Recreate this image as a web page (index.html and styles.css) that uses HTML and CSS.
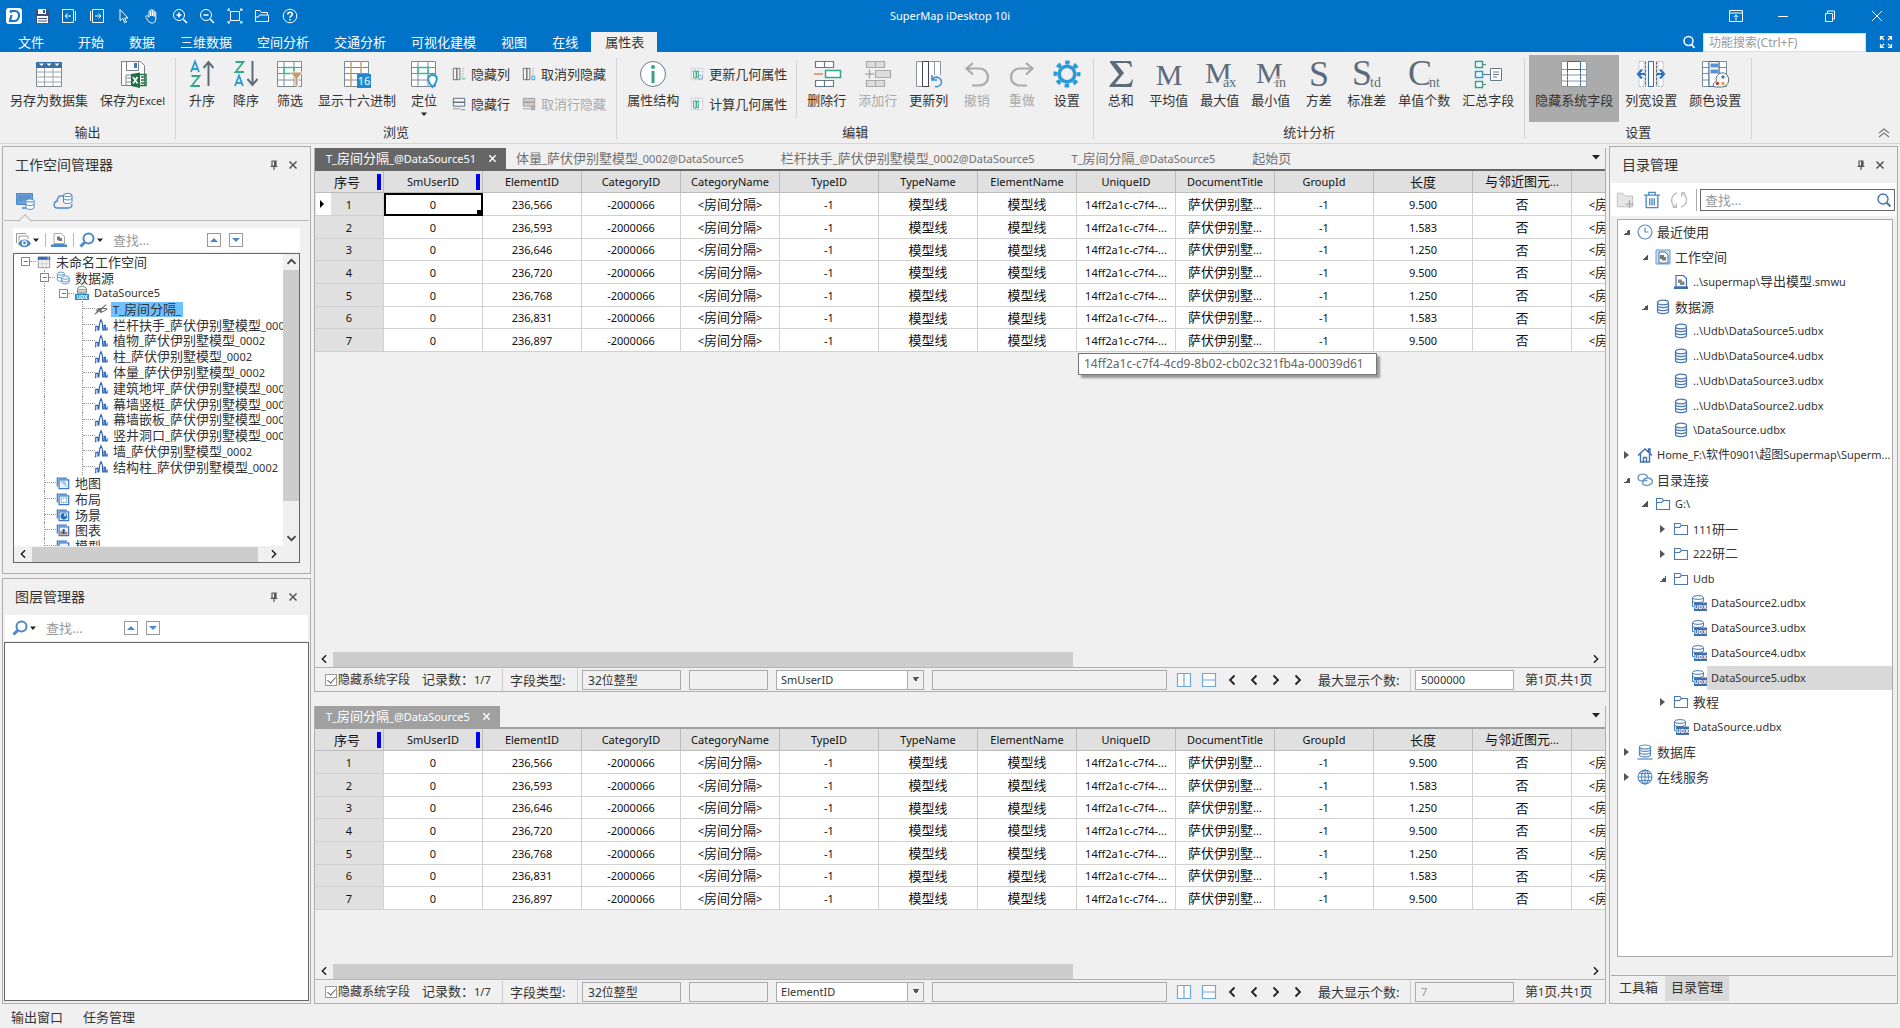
FILE: index.html
```html
<!DOCTYPE html>
<html lang="zh-CN">
<head>
  <meta charset="UTF-8">
  <meta name="viewport" content="width=device-width, initial-scale=1.0">
  <title>SuperMap iDesktop 10i</title>
  <link rel="stylesheet" href="styles.css">
</head>
<body>
  <!-- Icon sprite -->
  <svg class="sprite" aria-hidden="true">
    <symbol id="i-pin" viewBox="0 0 10 10"><path d="M3 1h4v5H3zM1.500 6.500h7M5 6.500V10" fill="none" stroke="#555" stroke-width="1.200"/><path d="M5 1h2v5H5z" fill="#555"/></symbol>
    <symbol id="i-close" viewBox="0 0 10 10"><path d="M1.500 1.500l7 7M8.500 1.500l-7 7" fill="none" stroke="#555" stroke-width="1.500"/></symbol>
    <symbol id="i-search" viewBox="0 0 16 16"><circle cx="9.500" cy="6.500" r="5" fill="none" stroke="#4a88c7" stroke-width="2"/><path d="M5.500 10.500L1.500 14.500" stroke="#4a88c7" stroke-width="3"/></symbol>
    <symbol id="i-db" viewBox="0 0 16 16"><g fill="#fff" stroke="#4a78b0" stroke-width="1.200"><path d="M2.500 3.500v9c0 2.700 11 2.700 11 0v-9"/><ellipse cx="8" cy="3.500" rx="5.500" ry="2.300"/><path d="M2.500 6.500c0 2.700 11 2.700 11 0M2.500 9.500c0 2.700 11 2.700 11 0" fill="none"/></g></symbol>
    <symbol id="i-dbbase" viewBox="0 0 16 16"><g fill="#fff" stroke="#5585bd" stroke-width="1.200"><path d="M2.500 3v8c0 2.500 11 2.500 11 0V3"/><ellipse cx="8" cy="3" rx="5.500" ry="2"/><path d="M2.500 5.500c0 2.500 11 2.500 11 0M2.500 8.300c0 2.500 11 2.500 11 0" fill="none"/><path d="M.5 15h15"/></g></symbol>
    <symbol id="i-udx" viewBox="0 0 16 16"><path d="M1.500 2.500v9h5M12.500 2.500V6" fill="none" stroke="#4a78b0"/><ellipse cx="7" cy="2.500" rx="5.500" ry="1.900" fill="#fff" stroke="#4a78b0"/><path d="M1.500 6.500c2 1.500 6 1.500 11 0" fill="none" stroke="#4a78b0"/><path d="M3 7.500h13V16H3z" fill="#3f6fae"/><text x="9.500" y="14.300" class="svg-udx">UDX</text></symbol>
    <symbol id="i-udxl" viewBox="0 0 16 16"><path d="M3 2.500V9h10V2.500" fill="#eee" stroke="#777"/><ellipse cx="8" cy="2.500" rx="5" ry="1.900" fill="#fff" stroke="#777"/><path d="M3 6c2 1.500 8 1.500 10 0" fill="none" stroke="#777"/><path d="M0 9h16v7H0z" fill="#2a8ecb"/><text x="8" y="15" class="svg-udx">UDX</text></symbol>
    <symbol id="i-folder" viewBox="0 0 16 16"><path d="M1.500 13.500v-11H7l1.500 2h6v9zM1.500 6.500h5l2-2" fill="none" stroke="#4a78b0" stroke-width="1.100"/></symbol>
    <symbol id="i-clock" viewBox="0 0 16 16"><circle cx="8" cy="8" r="7" fill="none" stroke="#5b8cc0" stroke-width="1.200"/><path d="M8 3.500V8h3.500" fill="none" stroke="#5b8cc0" stroke-width="1.200"/></symbol>
    <symbol id="i-wsfile" viewBox="0 0 16 16"><path d="M1 1h14v14H1z" fill="#cfe0f1" stroke="#6c99c9"/><path d="M4 3h6l3 3v8H4z" fill="#fff" stroke="#3f6fae"/><path d="M5 6h4v2h2v3.500H7V10H5z" fill="#777"/></symbol>
    <symbol id="i-smwu" viewBox="0 0 16 16"><path d="M3 1.500h7.500l3 3V13H3z" fill="#fff" stroke="#3f6fae" stroke-width="1.200"/><path d="M5 5.500h4v2h2.500V11H7V9H5z" fill="#888"/><path d="M1 12.500h14V15H1z" fill="#3f6fae"/></symbol>
    <symbol id="i-home" viewBox="0 0 16 16"><path d="M1 8.500L8 2l7 6.500M3.500 7v8h9V7M11.500 4.500V2H13v4M6.500 15v-4.500h3V15" fill="none" stroke="#3f6fae" stroke-width="1.400"/></symbol>
    <symbol id="i-link" viewBox="0 0 16 16"><path d="M10.500 5.500c0-5-9.500-4-9.500.3C1 8.500 4 9.500 6 8.500c1.500-3 7-3.500 9-.5 2.500 5-8.500 7.500-9.500 3 0-1 .5-2 2-2.500h3" fill="none" stroke="#6c99c9" stroke-width="1.400"/></symbol>
    <symbol id="i-globe" viewBox="0 0 16 16"><g fill="none" stroke="#5585bd" stroke-width="1.100"><circle cx="8" cy="8" r="7"/><ellipse cx="8" cy="8" rx="3.500" ry="7"/><path d="M8 1v14M1 8h14M2 4.500h12M2 11.500h12"/></g></symbol>
    <symbol id="i-model" viewBox="0 0 16 16"><path d="M1 14.500h1V9.500h2.500v4h1l1-8L8 2l1.500 3.500.5 8h1.500V8.500H13v5h2v-3" fill="none" stroke="#2d62b8" stroke-width="1.300"/></symbol>
    <symbol id="i-cad" viewBox="0 0 16 16"><path d="M1 14L14 3M2 9.500c3-3 5-2 5 1s4 0 8-2.500M3 11.500c4-5 6-4 5 0M6 7.500h9" fill="none" stroke="#666" stroke-width="1.200"/></symbol>
    <symbol id="i-ws" viewBox="0 0 16 16"><path d="M1.500 2.500h13v12h-13z" fill="#f4f4f4" stroke="#8a8a8a"/><path d="M1 2h14v3.500H1z" fill="#3568b5"/><path d="M12 2.800h1.500v1.500H12z" fill="#fff"/><path d="M6 6v8M10.500 6v8M2 10h12" stroke="#ccc" fill="none"/></symbol>
    <symbol id="i-src" viewBox="0 0 16 16"><g fill="#fff" stroke="#4a88c7"><path d="M1.500 3v7c0 1.500 3 2 5 1.500M9.500 5V3"/><ellipse cx="5.500" cy="3" rx="4" ry="1.700"/><path d="M1.500 6.500c1 1.200 3 1.500 4.500 1"/><path d="M6.500 8v4.500c0 3 8.500 3 8.500 0V8"/><ellipse cx="10.700" cy="7.500" rx="4.200" ry="1.900"/><path d="M6.500 10.500c1 2.500 7.500 2.500 8.500 0" fill="none"/></g></symbol>
    <symbol id="i-stack" viewBox="0 0 16 16"><path d="M1.500 12V2.500h11M3.500 4.500h11v10h-11z" fill="#eaf2fb" stroke="#3f78c5" stroke-width="1.400"/></symbol>
    <symbol id="i-caret" viewBox="0 0 8 8"><path d="M0 2h8L4 6.500z" fill="#222"/></symbol>
    <symbol id="i-eye" viewBox="0 0 16 16"><path d="M1.500 11V1.500H11M4 9V4h9v3" fill="none" stroke="#999"/><path d="M3 11.500c3-5.500 10-5.500 13 0-3 5-10 5-13 0z" fill="#4a88c7"/><circle cx="9.500" cy="11" r="2.700" fill="#fff"/><circle cx="9.500" cy="11" r="1.400" fill="#4a88c7"/></symbol>
    <symbol id="i-colv" viewBox="0 0 16 16"><path d="M1.500 1.500h13v13h-13zM8 1.500v13" fill="#fff" stroke="#6fa8dc" stroke-width="1.200"/></symbol>
    <symbol id="i-rowh" viewBox="0 0 16 16"><path d="M1.500 1.500h13v13h-13zM1.500 8h13" fill="#fff" stroke="#6fa8dc" stroke-width="1.200"/></symbol>
    <symbol id="i-prev" viewBox="0 0 10 12"><path d="M7.500 1.500L3 6l4.500 4.500" fill="none" stroke="#222" stroke-width="1.800"/></symbol>
    <symbol id="i-next" viewBox="0 0 10 12"><path d="M2.500 1.500L7 6l-4.500 4.500" fill="none" stroke="#222" stroke-width="1.800"/></symbol>
    <symbol id="i-up" viewBox="0 0 10 12"><path d="M.5 8L5 3.500 9.500 8" fill="none" stroke="#444" stroke-width="2"/></symbol>
    <symbol id="i-down" viewBox="0 0 10 12"><path d="M.5 4L5 8.500 9.500 4" fill="none" stroke="#444" stroke-width="2"/></symbol>
    <symbol id="i-colhide" viewBox="0 0 16 16"><path d="M1.500 1.500h4v13h-4zM5.500 1.500H9v13H5.500z" fill="#f4f4f4" stroke="#666"/><path d="M12.500 1v11" stroke="#999" stroke-dasharray="1.500 1.500"/><path d="M11 13.500h4" stroke="#35a384"/></symbol>
    <symbol id="i-rowhide" viewBox="0 0 16 16"><path d="M1.500 1.500h13v4.500h-13zM1.500 6h13v4.500h-13z" fill="#f4f4f4" stroke="#4f5f70"/><path d="M1 13.500h8" stroke="#888"/><path d="M10 14.500h5" stroke="#35a384"/></symbol>
    <symbol id="i-geo" viewBox="0 0 16 16"><path d="M1.500 1.500h13v13h-13zM6 1.500v13M10 1.500v13M1.500 5h13" fill="#fff" stroke="#c3ccd3"/><path d="M4 4.500h3v8H4zM7.500 4.500h2v8h-2z" fill="#d9f0e9" stroke="#3aa387"/></symbol>
    <symbol id="i-table" viewBox="0 0 28 28"><path d="M1.500 2.500h25v24h-25z" fill="#fff" stroke="#7d8a96"/><path d="M1.500 12h25M1.500 17h25M1.500 22h25M9.500 8v18M18 8v18" stroke="#9aa5af" fill="none"/><path d="M1 2h26v6H1z" fill="#3c6ea8"/><path d="M4 3.500h5L6.500 6zM11.500 3.500h5L14 6zM19.500 3.500h5L22 6z" fill="#fff"/></symbol>
    <symbol id="i-grid" viewBox="0 0 28 28"><path d="M1.500 1.500h24v25h-24zM1.500 7.500h24M1.500 13.500h24M1.500 20h24M8 1.500v25M18 1.500v25" fill="#fff" stroke="#7d8a96"/></symbol>
    <symbol id="i-undo" viewBox="0 0 28 28"><path d="M10 3L3.500 8.500 10 14.500M4 8.500h12c12 0 12 17 0 17H9" fill="none" stroke="#aaa" stroke-width="2.200"/></symbol>
    <symbol id="i-rows" viewBox="0 0 28 28"><path d="M2.500 1.500h18v6h-18zM11.500 1.500v6M2.500 20.500h18v6h-18zM11.500 20.500v6" fill="#fff" stroke="#66788a" stroke-width="1.200"/></symbol>
  </svg>

  <!-- Title bar -->
  <header class="titlebar">
    <div class="title-row">
      <div class="quick">
        <button aria-label="SuperMap"><svg viewBox="0 0 16 16"><rect width="16" height="16" rx="3" fill="#fff"/><path d="M6 3h3c6 0 5 10-1 10H4l1.500-6" fill="none" stroke="#1577c6" stroke-width="2.200"/><circle cx="5" cy="3.500" r="1.400" fill="#1577c6"/></svg></button>
        <button aria-label="保存"><svg viewBox="0 0 16 16"><path d="M2 1h11l2 2v12H2z" fill="#3c4f77"/><path d="M4 1h8v5H4zM3 8h11v7H3z" fill="#fff"/><path d="M9 2h2v3H9zM4 10h9v1H4zM4 12.500h9v1H4z" fill="#3c4f77"/></svg></button>
        <button aria-label="后退"><svg viewBox="0 0 16 16"><path d="M1.500 1.500h11v13h-11zM14.500 3v10M10 8H4M6.500 5.500L4 8l2.500 2.500"/></svg></button>
        <button aria-label="前进"><svg viewBox="0 0 16 16"><path d="M3.500 1.500h11v13h-11zM1.500 3v10M6 8h6M9.500 5.500L12 8l-2.500 2.500"/></svg></button>
        <button aria-label="选择"><svg viewBox="0 0 16 16"><path d="M4 1.500l8 8.500H8.500l2 4-1.700.8-2-4.300L4 12.500z"/></svg></button>
        <button aria-label="漫游"><svg viewBox="0 0 16 16"><path d="M5 9V3.500c0-1 1.700-1 1.700 0V8 2.200c0-1 1.700-1 1.700 0V8 2.800c0-1 1.700-1 1.700 0V8.500 4.500c0-1 1.700-1 1.700 0V11c0 2.500-1.500 4-3.500 4-3.300 0-4-2-6.300-5.500C1.500 8 3 7 4 8l1 1.500"/></svg></button>
        <button aria-label="放大"><svg viewBox="0 0 16 16"><circle cx="7" cy="7" r="5.500"/><path d="M11 11l4 4M4.500 7h5M7 4.500v5" stroke-width="1.600"/></svg></button>
        <button aria-label="缩小"><svg viewBox="0 0 16 16"><circle cx="7" cy="7" r="5.500"/><path d="M11 11l4 4M4.500 7h5" stroke-width="1.600"/></svg></button>
        <button aria-label="全幅"><svg viewBox="0 0 16 16"><path d="M3.500 3.500h9v9h-9zM1 1l2.500 2.500M15 1l-2.500 2.500M1 15l2.500-2.500M15 15l-2.500-2.500M1 3V1h2M13 1h2v2M1 13v2h2M13 15h2v-2"/></svg></button>
        <button aria-label="打开"><svg viewBox="0 0 16 16"><path d="M1.500 13.500v-11H6l1.500 2h6V7M1.500 13.500h13V7h-9l-1 2h-3"/></svg></button>
        <button aria-label="帮助"><svg viewBox="0 0 16 16"><circle cx="8" cy="8" r="6.800"/><path d="M5.800 6.500c0-3 4.500-3 4.500-.3C10.300 8 8 7.800 8 9.800M8 11v1.500" stroke-width="1.600"/></svg></button>
      </div>
      <h1>SuperMap iDesktop 10i</h1>
      <div class="window-buttons">
        <button aria-label="功能区"><svg viewBox="0 0 14 14"><path d="M.5 1.500h13v11H.5zM.5 4h13M7 11.500V6M4.800 8L7 5.800 9.200 8"/></svg></button>
        <button aria-label="最小化"><svg viewBox="0 0 14 14"><path d="M2 7.500h10"/></svg></button>
        <button aria-label="还原"><svg viewBox="0 0 14 14"><path d="M2.500 4.500h7v8h-7zM4.500 4V2h7v8H10"/></svg></button>
        <button aria-label="关闭"><svg viewBox="0 0 14 14"><path d="M2 2l10 10M12 2L2 12"/></svg></button>
      </div>
    </div>
    <div class="tab-row">
      <nav>
        <a href="#" class="file-tab">文件</a>
        <a href="#">开始</a>
        <a href="#">数据</a>
        <a href="#">三维数据</a>
        <a href="#">空间分析</a>
        <a href="#">交通分析</a>
        <a href="#">可视化建模</a>
        <a href="#">视图</a>
        <a href="#">在线</a>
        <a href="#" class="active">属性表</a>
      </nav>
      <div class="feature-search">
        <svg viewBox="0 0 14 14" width="14" height="14"><circle cx="6.500" cy="6" r="4.500" fill="none" stroke="#fff" stroke-width="1.500"/><path d="M9.500 9.500l3 3.500" stroke="#fff" stroke-width="1.800"/></svg>
        <input type="text" aria-label="功能搜索" placeholder="功能搜索(Ctrl+F)">
        <svg viewBox="0 0 14 14" width="14" height="14"><path d="M1.500 5V1.500H5M9 1.500h3.500V5M1.500 9v3.500H5M9 12.500h3.500V9M2 2l3 3M12 2L9 5M2 12l3-3M12 12L9 9" fill="none" stroke="#fff" stroke-width="1.200"/></svg>
      </div>
    </div>
  </header>

  <!-- Ribbon -->
  <section class="ribbon">
    <div class="group">
      <div class="tools">
        <button class="big"><svg><use href="#i-table"/></svg>另存为数据集</button>
        <button class="big"><svg viewBox="0 0 28 28"><path d="M2.500 1.500h19l4 4v20h-23z" fill="#fff" stroke="#75818d"/><path d="M7.500 1.500h12v9h-12z" fill="#fff" stroke="#75818d"/><path d="M15 3h3v5h-3z" fill="#3c7ab8"/><path d="M7 26V15h6M8 18h4M8 22h4" stroke="#75818d" fill="none"/><path d="M12 14l9-1.500v15.500L12 26z" fill="#1f7145"/><path d="M21 14.500h6v11h-6M22 17h4M22 20h4M22 23h4" fill="none" stroke="#1f7145" stroke-width="1.500"/><path d="M14 17l4.500 6.500M18.500 17L14 23.500" stroke="#fff" stroke-width="1.600"/></svg><span>保存为<span class="en">Excel</span></span></button>
      </div>
      <div class="group-name">输出</div>
    </div>
    <div class="group browse">
      <div class="tools">
        <button class="big"><svg viewBox="0 0 28 28"><path d="M3 12L7 1.500 11 12M4.500 9h5" fill="none" stroke="#2a9bd8" stroke-width="1.800"/><path d="M3.500 16h8l-8 10h8.500" fill="none" stroke="#2fa889" stroke-width="1.800"/><path d="M20.500 26V2M15.500 8l5-6 5 6" fill="none" stroke="#5d6c7b" stroke-width="2"/></svg>升序</button>
        <button class="big"><svg viewBox="0 0 28 28"><path d="M3.500 2h8l-8 10h8.500" fill="none" stroke="#2fa889" stroke-width="1.800"/><path d="M3 26l4-10.500L11 26M4.500 23h5" fill="none" stroke="#2a9bd8" stroke-width="1.800"/><path d="M20.500 1v24M15.500 19l5 6 5-6" fill="none" stroke="#5d6c7b" stroke-width="2"/></svg>降序</button>
        <button class="big"><svg viewBox="0 0 28 28"><use href="#i-grid" width="28" height="28"/><path d="M8 7.500h10v6H8z" fill="none" stroke="#3dbb94" stroke-width="1.500"/><path d="M14 12h13l-5 6v9l-3-2v-7z" fill="#c79b6b" stroke="#f0f0f0"/></svg>筛选</button>
        <button class="big"><svg viewBox="0 0 28 28"><use href="#i-grid" width="28" height="28"/><path d="M8 1.500v25M18 1.500v25" stroke="#e5a668"/><path d="M14 14h14v14H14z" fill="#2089cf"/><text x="21" y="25" class="svg-16">16</text></svg>显示十六进制</button>
        <button class="big has-menu"><svg viewBox="0 0 28 28"><use href="#i-grid" width="28" height="28"/><path d="M8 7.500h10v6H8z" fill="none" stroke="#3dbb94" stroke-width="1.500"/><path d="M22.500 27c-8-9-3-12 0-12s8 3 0 12z" fill="#fff" stroke="#2a9bd8" stroke-width="2"/></svg>定位<svg class="menu-caret"><use href="#i-caret"/></svg></button>
        <div class="small-tools">
          <button><svg><use href="#i-colhide"/></svg>隐藏列</button>
          <button><svg><use href="#i-rowhide"/></svg>隐藏行</button>
        </div>
        <div class="small-tools">
          <button><svg viewBox="0 0 16 16"><use href="#i-colhide" width="16" height="16"/><path d="M11.500 10.500h3v4h-3z" fill="#fff" stroke="#2a9bd8"/></svg>取消列隐藏</button>
          <button disabled><svg viewBox="0 0 16 16"><path d="M1.500 1.500h13v4.500h-13zM1.500 6h13v4.500h-13z" fill="#ccc" stroke="#999"/><path d="M1 13.500h8M10.500 10.500h4v4h-4z" fill="#bbb" stroke="#999"/></svg>取消行隐藏</button>
        </div>
      </div>
      <div class="group-name">浏览</div>
    </div>
    <div class="group">
      <div class="tools">
        <button class="big"><svg viewBox="0 0 28 28"><circle cx="14" cy="14" r="12.500" fill="#fff" stroke="#6e7c89"/><path d="M14 11v12" stroke="#35a384" stroke-width="3"/><circle cx="14" cy="7" r="2" fill="#35a384"/></svg>属性结构</button>
        <div class="small-tools geometry">
          <button><svg viewBox="0 0 16 16"><use href="#i-geo" width="16" height="16"/><path d="M10 11c2-3 5-1 4 2M10 14l4-1" fill="none" stroke="#4a9bd8"/></svg>更新几何属性</button>
          <button><svg><use href="#i-geo"/></svg>计算几何属性</button>
        </div>
        <div class="divider"></div>
        <button class="big"><svg viewBox="0 0 28 28"><use href="#i-rows" width="28" height="28"/><path d="M12.500 10.500h15v7h-15z" fill="#fff" stroke="#35a384" stroke-width="1.500"/><path d="M1 14h9" stroke="#d98a4e" stroke-width="1.500"/></svg>删除行</button>
        <button class="big" disabled><svg viewBox="0 0 28 28"><path d="M2.500 1.500h18v6h-18zM11.500 1.500v6M2.500 20.500h18v6h-18zM11.500 20.500v6M11.500 10.500h15v7h-15z" fill="#ddd" stroke="#aaa" stroke-width="1.200"/><path d="M1 14h9M5.500 9.500v9" stroke="#aaa" stroke-width="1.500"/></svg>添加行</button>
        <button class="big"><svg viewBox="0 0 28 28"><path d="M1.500 1.500h6v25h-6zM7.500 1.500h6v25h-6zM13.500 1.500h6v25h-6zM19.500 1.500h6v25h-6z" fill="#fff" stroke="#8b96a0"/><path d="M7.500 1.500h6v25h-6z" fill="none" stroke="#445"/><path d="M15 15h13v13H15z" fill="#f0f0f0"/><path d="M17 15v5h5M17 20c4-6 11-1 9 4-1 2-3 3-6 2.500" fill="none" stroke="#3c8ed0" stroke-width="1.500"/></svg>更新列</button>
        <button class="big" disabled><svg><use href="#i-undo"/></svg>撤销</button>
        <button class="big" disabled><svg viewBox="0 0 28 28"><use href="#i-undo" width="28" height="28" transform="translate(28 0) scale(-1 1)"/></svg>重做</button>
        <button class="big"><svg viewBox="0 0 28 28"><circle cx="14" cy="14" r="7.800" fill="none" stroke="#2a9bd8" stroke-width="3.500"/><circle cx="14" cy="14" r="11.500" fill="none" stroke="#2a9bd8" stroke-width="4" stroke-dasharray="4.500 4.530" stroke-dashoffset="2.250"/></svg>设置</button>
      </div>
      <div class="group-name">编辑</div>
    </div>
    <div class="group">
      <div class="tools">
        <button class="big"><svg viewBox="0 0 28 28"><path d="M3 1h21l1 6h-1.500c-.5-3-1.500-4-5-4H9l8 10L8 24h11c3.500 0 5-1.500 6-4.500h1L24.500 27H2.500v-1.500L12 14.500 3 2.500z" fill="#5d6c7b"/></svg>总和</button>
        <button class="big"><svg viewBox="0 0 28 28"><text x="14" y="25" class="svg-stat middle">M</text></svg>平均值</button>
        <button class="big"><svg viewBox="0 0 28 28"><text x="-1" y="23" class="svg-stat">M</text><text x="17" y="27" class="svg-sub">ax</text></svg>最大值</button>
        <button class="big"><svg viewBox="0 0 28 28"><text x="-1" y="23" class="svg-stat">M</text><text x="18" y="27" class="svg-sub">in</text></svg>最小值</button>
        <button class="big"><svg viewBox="0 0 28 28"><text x="14" y="26" class="svg-stat tall middle">S</text></svg>方差</button>
        <button class="big"><svg viewBox="0 0 28 28"><text x="-1" y="25" class="svg-stat tall">S</text><text x="17" y="27" class="svg-sub">td</text></svg>标准差</button>
        <button class="big"><svg viewBox="0 0 28 28"><text x="-2" y="25" class="svg-stat tall">C</text><text x="19" y="27" class="svg-sub">nt</text></svg>单值个数</button>
        <button class="big"><svg viewBox="0 0 28 28"><path d="M8 4.500h4M8 14.500h9M8 24.500h4" stroke="#66788a" stroke-width="1.200"/><path d="M1.500 1.500h7v6h-7zM1.500 21.500h7v6h-7z" fill="#fff" stroke="#35a384" stroke-width="1.500"/><path d="M1.500 11.500h7v6h-7z" fill="#fff" stroke="#2a9bd8" stroke-width="1.500"/><path d="M16.500 8.500h11v12h-11zM19 12h6M19 14.500h6M19 17h4" fill="#fff" stroke="#66788a"/></svg>汇总字段</button>
      </div>
      <div class="group-name">统计分析</div>
    </div>
    <div class="group">
      <div class="tools">
        <button class="big pressed"><svg viewBox="0 0 28 28"><path d="M1.500 1.500h25v25h-25zM1.500 9.500h25M1.500 15h25M1.500 21h25M7.500 1.500v25M20.500 1.500v25" fill="#fff" stroke="#8a96a2"/><path d="M7.500 1.500h13v8h-13z" fill="#fff" stroke="#3568a8"/><path d="M7.500 10v17M20.500 10v17" stroke="#3568a8" stroke-dasharray="2 1.500"/></svg>隐藏系统字段</button>
        <button class="big"><svg viewBox="0 0 28 28"><path d="M2 1.500h5v25H2zM21 1.500h5v25h-5z" fill="#fff" stroke="#aab4bd" stroke-dasharray="2 1"/><path d="M8.500 1.500v25M19.500 1.500v25" stroke="#667" stroke-dasharray="3 1"/><path d="M11.500 1.500h5v25h-5z" fill="#fff" stroke="#3568b5"/><path d="M8 14H1M5 9.500L1 14l4 4.500M20 14h7M23 9.500l4 4.500-4 4.500" fill="none" stroke="#2e72bd" stroke-width="2.200"/></svg>列宽设置</button>
        <button class="big"><svg viewBox="0 0 28 28"><use href="#i-grid" width="28" height="28"/><path d="M8 1.500h10v25H8z" fill="#fff" stroke="#3568a8"/><path d="M9.500 3.500h8v4h-8zM9.500 9.500h8v4h-8z" fill="#5a93d1"/><path d="M20 13c5-1 8 3 7.500 8-.5 4-3.500 6-7 6h-6c-3 0-3-4 0-5 2-1 0-3 1-5 1-2 2.500-3.500 4.500-4z" fill="#fff" stroke="#567"/><circle cx="22" cy="17" r="1.700" fill="#3c7ab8"/><circle cx="16.500" cy="23.500" r="1.700" fill="#c0392b"/><circle cx="22" cy="23.500" r="1.700" fill="#e0a030"/></svg>颜色设置</button>
      </div>
      <div class="group-name">设置</div>
    </div>
    <button class="collapse" aria-label="折叠"><svg viewBox="0 0 12 10" width="12" height="10"><path d="M1 5l5-4 5 4M1 9l5-4 5 4" fill="none" stroke="#777" stroke-width="1.200"/></svg></button>
  </section>

  <!-- Workspace -->
  <main>
    <div class="left">
      <section class="panel">
        <div class="panel-head">
          <h2>工作空间管理器</h2>
          <button aria-label="固定"><svg><use href="#i-pin"/></svg></button>
          <button aria-label="关闭"><svg><use href="#i-close"/></svg></button>
        </div>
        <div class="source-tabs">
          <button class="active" aria-label="本地"><svg viewBox="0 0 20 18"><path d="M1.500 1.500h16v11h-16z" fill="#6fa3d6" stroke="#4a88c7"/><path d="M3 3h13v2L3 11z" fill="#5a93cd"/><path d="M7 16h4" stroke="#4a88c7" stroke-width="1.500"/><path d="M11 8.500v7c0 2.500 8 2.500 8 0v-7" fill="#fff" stroke="#4a88c7"/><ellipse cx="15" cy="8.500" rx="4" ry="1.600" fill="#fff" stroke="#4a88c7"/><path d="M11 12c1 2 7 2 8 0" fill="none" stroke="#4a88c7"/></svg></button>
          <button aria-label="在线"><svg viewBox="0 0 20 18"><path d="M10 4c-4-1-6 2-5.500 5C0 10 0 16 4.500 16H15c3 0 4-2 4-4" fill="none" stroke="#4a88c7" stroke-width="1.300"/><path d="M10.500 3v7c0 2 8.500 2 8.500 0V3" fill="#fff" stroke="#4a88c7"/><ellipse cx="14.700" cy="3" rx="4.200" ry="1.600" fill="#fff" stroke="#4a88c7"/><path d="M10.500 6.500c1 2 7.500 2 8.500 0" fill="none" stroke="#4a88c7"/></svg></button>
        </div>
        <div class="find-bar">
          <button aria-label="显示"><svg><use href="#i-eye"/></svg><svg class="tiny"><use href="#i-caret"/></svg></button>
          <i></i>
          <button aria-label="保存工作空间"><svg viewBox="0 0 16 16"><path d="M3 1.500h7.500l3 3V12H3z" fill="#fff" stroke="#aaa"/><path d="M6 4.500h3v1.500h2v3H7.500V8H6z" fill="#777"/><path d="M0 12.500h3v-1h10v1h3V15H0z" fill="#4a88c7"/></svg></button>
          <i></i>
          <button aria-label="搜索"><svg><use href="#i-search"/></svg><svg class="tiny"><use href="#i-caret"/></svg></button>
          <input type="text" aria-label="查找" placeholder="查找...">
          <button class="step" aria-label="上一个"><svg viewBox="0 0 12 12"><path d="M2 8h8L6 4z" fill="#4a88c7"/></svg></button>
          <button class="step" aria-label="下一个"><svg viewBox="0 0 12 12"><path d="M2 4h8L6 8z" fill="#4a88c7"/></svg></button>
        </div>
        <div class="tree-box">
          <div class="tree-clip">
            <ul class="ws-tree">
              <li class="lv0"><b>−</b><svg><use href="#i-ws"/></svg><span>未命名工作空间</span></li>
              <li class="lv1"><b>−</b><svg><use href="#i-src"/></svg><span>数据源</span></li>
              <li class="lv2"><b>−</b><svg><use href="#i-udxl"/></svg><span class="en">DataSource5</span></li>
              <li class="lv3"><s></s><svg><use href="#i-cad"/></svg><span class="selected"><span class="en">T_</span>房间分隔<span class="en">_</span></span></li>
              <li class="lv3"><s></s><svg><use href="#i-model"/></svg><span>栏杆扶手<span class="en">_</span>萨伏伊别墅模型<span class="en">_0002</span></span></li>
              <li class="lv3"><s></s><svg><use href="#i-model"/></svg><span>植物<span class="en">_</span>萨伏伊别墅模型<span class="en">_0002</span></span></li>
              <li class="lv3"><s></s><svg><use href="#i-model"/></svg><span>柱<span class="en">_</span>萨伏伊别墅模型<span class="en">_0002</span></span></li>
              <li class="lv3"><s></s><svg><use href="#i-model"/></svg><span>体量<span class="en">_</span>萨伏伊别墅模型<span class="en">_0002</span></span></li>
              <li class="lv3"><s></s><svg><use href="#i-model"/></svg><span>建筑地坪<span class="en">_</span>萨伏伊别墅模型<span class="en">_0002</span></span></li>
              <li class="lv3"><s></s><svg><use href="#i-model"/></svg><span>幕墙竖梃<span class="en">_</span>萨伏伊别墅模型<span class="en">_0002</span></span></li>
              <li class="lv3"><s></s><svg><use href="#i-model"/></svg><span>幕墙嵌板<span class="en">_</span>萨伏伊别墅模型<span class="en">_0002</span></span></li>
              <li class="lv3"><s></s><svg><use href="#i-model"/></svg><span>竖井洞口<span class="en">_</span>萨伏伊别墅模型<span class="en">_0002</span></span></li>
              <li class="lv3"><s></s><svg><use href="#i-model"/></svg><span>墙<span class="en">_</span>萨伏伊别墅模型<span class="en">_0002</span></span></li>
              <li class="lv3"><s></s><svg><use href="#i-model"/></svg><span>结构柱<span class="en">_</span>萨伏伊别墅模型<span class="en">_0002</span></span></li>
              <li class="lv1"><s></s><svg viewBox="0 0 16 16"><use href="#i-stack" width="16" height="16"/><path d="M5 6h5l3 7z" fill="#8fc0ee"/></svg><span>地图</span></li>
              <li class="lv1"><s></s><svg viewBox="0 0 16 16"><use href="#i-stack" width="16" height="16"/><path d="M6 7h6v5H6z" fill="#fff" stroke="#3f78c5" stroke-dasharray="1 1"/></svg><span>布局</span></li>
              <li class="lv1"><s></s><svg viewBox="0 0 16 16"><use href="#i-stack" width="16" height="16"/><circle cx="9" cy="9.500" r="3.800" fill="#2373c4"/><path d="M9 6l3 2-2 2z" fill="#fff"/></svg><span>场景</span></li>
              <li class="lv1"><s></s><svg viewBox="0 0 16 16"><use href="#i-stack" width="16" height="16"/><path d="M5 9.500h2.500V13H5zM10.500 10H13v3h-2.500z" fill="#c9662a"/><path d="M7.500 7H10v6H7.500z" fill="#24508f"/></svg><span>图表</span></li>
              <li class="lv1"><s></s><svg viewBox="0 0 16 16"><use href="#i-stack" width="16" height="16"/></svg><span>模型</span></li>
            </ul>
          </div>
          <div class="vscroll"><svg><use href="#i-up"/></svg><div class="vtrack"><div class="vthumb"></div></div><svg><use href="#i-down"/></svg></div>
          <div class="hscroll"><svg><use href="#i-prev"/></svg><div class="htrack"><div class="hthumb tree-thumb"></div></div><svg><use href="#i-next"/></svg></div>
        </div>
      </section>
      <section class="panel">
        <div class="panel-head">
          <h2>图层管理器</h2>
          <button aria-label="固定"><svg><use href="#i-pin"/></svg></button>
          <button aria-label="关闭"><svg><use href="#i-close"/></svg></button>
        </div>
        <div class="find-bar layers">
          <button aria-label="搜索"><svg><use href="#i-search"/></svg><svg class="tiny"><use href="#i-caret"/></svg></button>
          <input type="text" aria-label="查找图层" placeholder="查找...">
          <button class="step" aria-label="上一个"><svg viewBox="0 0 12 12"><path d="M2 8h8L6 4z" fill="#4a88c7"/></svg></button>
          <button class="step" aria-label="下一个"><svg viewBox="0 0 12 12"><path d="M2 4h8L6 8z" fill="#4a88c7"/></svg></button>
        </div>
        <div class="layer-box"></div>
      </section>
    </div>

    <div class="center">
      <section class="doc">
        <div class="doc-tabs">
          <a href="#" class="active"><span><span class="en">T_</span>房间分隔<span class="en">_@DataSource51</span></span><svg viewBox="0 0 10 10"><path d="M1.500 1.500l7 7M8.500 1.500l-7 7" stroke="#fff" stroke-width="1.600"/></svg></a>
          <a href="#">体量<span class="en">_</span>萨伏伊别墅模型<span class="en">_0002@DataSource5</span></a>
          <a href="#">栏杆扶手<span class="en">_</span>萨伏伊别墅模型<span class="en">_0002@DataSource5</span></a>
          <a href="#"><span class="en">T_</span>房间分隔<span class="en">_@DataSource5</span></a>
          <a href="#">起始页</a>
          <button aria-label="更多"><svg><use href="#i-caret"/></svg></button>
        </div>
        <div class="grid-area"><table class="attr current"></table></div>
        <div class="tooltip">14ff2a1c-c7f4-4cd9-8b02-cb02c321fb4a-00039d61</div>
        <div class="hscroll"><svg><use href="#i-prev"/></svg><div class="htrack"><div class="hthumb"></div></div><svg><use href="#i-next"/></svg></div>
        <div class="status">
          <label class="check"><input type="checkbox" checked>隐藏系统字段</label>
          <span class="count">记录数：<span class="en">1/7</span></span>
          <label class="cell" for="type1">字段类型:</label>
          <input type="text" id="type1" class="type" value="32位整型" readonly>
          <input type="text" class="blank" aria-label="统计类型" readonly>
          <select aria-label="字段"><option>SmUserID</option><option>ElementID</option></select>
          <input type="text" class="result" aria-label="统计结果" readonly>
          <button aria-label="左右"><svg><use href="#i-colv"/></svg></button>
          <button aria-label="上下"><svg><use href="#i-rowh"/></svg></button>
          <div class="pager">
            <button aria-label="首页"><svg><use href="#i-prev"/></svg></button>
            <button aria-label="上一页"><svg><use href="#i-prev"/></svg></button>
            <button aria-label="下一页"><svg><use href="#i-next"/></svg></button>
            <button aria-label="末页"><svg><use href="#i-next"/></svg></button>
          </div>
          <label class="max" for="max1">最大显示个数:</label>
          <input type="text" id="max1" class="limit" value="5000000">
          <span class="pages">第<span class="en">1</span>页<span class="en">,</span>共<span class="en">1</span>页</span>
        </div>
      </section>

      <section class="doc inactive">
        <div class="doc-tabs">
          <a href="#" class="active"><span><span class="en">T_</span>房间分隔<span class="en">_@DataSource5</span></span><svg viewBox="0 0 10 10"><path d="M1.500 1.500l7 7M8.500 1.500l-7 7" stroke="#fff" stroke-width="1.600"/></svg></a>
          <button aria-label="更多"><svg><use href="#i-caret"/></svg></button>
        </div>
        <div class="grid-area"><table class="attr"></table></div>
        <div class="hscroll"><svg><use href="#i-prev"/></svg><div class="htrack"><div class="hthumb"></div></div><svg><use href="#i-next"/></svg></div>
        <div class="status">
          <label class="check"><input type="checkbox" checked>隐藏系统字段</label>
          <span class="count">记录数：<span class="en">1/7</span></span>
          <label class="cell" for="type2">字段类型:</label>
          <input type="text" id="type2" class="type" value="32位整型" readonly>
          <input type="text" class="blank" aria-label="统计类型" readonly>
          <select aria-label="字段"><option>ElementID</option><option>SmUserID</option></select>
          <input type="text" class="result" aria-label="统计结果" readonly>
          <button aria-label="左右"><svg><use href="#i-colv"/></svg></button>
          <button aria-label="上下"><svg><use href="#i-rowh"/></svg></button>
          <div class="pager">
            <button aria-label="首页"><svg><use href="#i-prev"/></svg></button>
            <button aria-label="上一页"><svg><use href="#i-prev"/></svg></button>
            <button aria-label="下一页"><svg><use href="#i-next"/></svg></button>
            <button aria-label="末页"><svg><use href="#i-next"/></svg></button>
          </div>
          <label class="max" for="max2">最大显示个数:</label>
          <input type="text" id="max2" class="limit" value="7" disabled>
          <span class="pages">第<span class="en">1</span>页<span class="en">,</span>共<span class="en">1</span>页</span>
        </div>
      </section>
    </div>

    <section class="panel catalog">
      <div class="panel-head">
        <h2>目录管理</h2>
        <button aria-label="固定"><svg><use href="#i-pin"/></svg></button>
        <button aria-label="关闭"><svg><use href="#i-close"/></svg></button>
      </div>
      <div class="catalog-bar">
        <button aria-label="新建文件夹"><svg viewBox="0 0 20 20"><path d="M1.500 17.500V2.500h6l2 3h9v12z" fill="#e6e6e6" stroke="#bbb"/><path d="M15 10v9M10.500 14.500h9" stroke="#aaa" stroke-width="1.500"/></svg></button>
        <button aria-label="删除"><svg viewBox="0 0 20 20"><path d="M1 4.500h18M6.500 4V1.500h7V4M3.500 4.500v14h13v-14M7.500 8v8M10 8v8M12.500 8v8" fill="none" stroke="#4a88c7" stroke-width="1.500"/></svg></button>
        <button aria-label="刷新"><svg viewBox="0 0 20 20"><path d="M8 2C-1 5 1 15 6 18M3 18h4v-4M12 18c9-3 7-13 2-16M17 2h-4v4" fill="none" stroke="#bbb" stroke-width="1.500"/></svg></button>
        <i></i>
        <div class="catalog-search">
          <input type="text" aria-label="查找目录" placeholder="查找...">
          <svg viewBox="0 0 16 16" width="16" height="16"><circle cx="7" cy="7" r="5" fill="none" stroke="#3f78b5" stroke-width="1.400"/><path d="M10.500 10.500l4 4" stroke="#3f78b5" stroke-width="2"/></svg>
        </div>
      </div>
      <div class="catalog-box">
        <ul class="catalog-tree">
          <li class="lv0 open"><svg><use href="#i-clock"/></svg><span>最近使用</span></li>
          <li class="lv1 open"><svg><use href="#i-wsfile"/></svg><span>工作空间</span></li>
          <li class="lv2"><svg><use href="#i-smwu"/></svg><span><span class="en">..\supermap\</span>导出模型<span class="en">.smwu</span></span></li>
          <li class="lv1 open"><svg><use href="#i-db"/></svg><span>数据源</span></li>
          <li class="lv2"><svg><use href="#i-db"/></svg><span class="en">..\Udb\DataSource5.udbx</span></li>
          <li class="lv2"><svg><use href="#i-db"/></svg><span class="en">..\Udb\DataSource4.udbx</span></li>
          <li class="lv2"><svg><use href="#i-db"/></svg><span class="en">..\Udb\DataSource3.udbx</span></li>
          <li class="lv2"><svg><use href="#i-db"/></svg><span class="en">..\Udb\DataSource2.udbx</span></li>
          <li class="lv2"><svg><use href="#i-db"/></svg><span class="en">\DataSource.udbx</span></li>
          <li class="lv0 shut"><svg><use href="#i-home"/></svg><span class="path"><span class="en">Home_F:\</span>软件<span class="en">0901\</span>超图<span class="en">Supermap\Superm...</span></span></li>
          <li class="lv0 open"><svg><use href="#i-link"/></svg><span>目录连接</span></li>
          <li class="lv1 open"><svg><use href="#i-folder"/></svg><span class="en">G:\</span></li>
          <li class="lv2 shut"><svg><use href="#i-folder"/></svg><span><span class="en">111</span>研一</span></li>
          <li class="lv2 shut"><svg><use href="#i-folder"/></svg><span><span class="en">222</span>研二</span></li>
          <li class="lv2 open"><svg><use href="#i-folder"/></svg><span class="en">Udb</span></li>
          <li class="lv3"><svg><use href="#i-udx"/></svg><span class="en">DataSource2.udbx</span></li>
          <li class="lv3"><svg><use href="#i-udx"/></svg><span class="en">DataSource3.udbx</span></li>
          <li class="lv3"><svg><use href="#i-udx"/></svg><span class="en">DataSource4.udbx</span></li>
          <li class="lv3"><svg><use href="#i-udx"/></svg><span class="en selected">DataSource5.udbx</span></li>
          <li class="lv2 shut"><svg><use href="#i-folder"/></svg><span>教程</span></li>
          <li class="lv2"><svg><use href="#i-udx"/></svg><span class="en">DataSource.udbx</span></li>
          <li class="lv0 shut"><svg><use href="#i-dbbase"/></svg><span>数据库</span></li>
          <li class="lv0 shut"><svg><use href="#i-globe"/></svg><span>在线服务</span></li>
        </ul>
      </div>
      <div class="catalog-tabs">
        <a href="#">工具箱</a>
        <a href="#" class="active">目录管理</a>
      </div>
    </section>
  </main>

  <footer>
    <a href="#">输出窗口</a>
    <a href="#">任务管理</a>
  </footer>

  <script src="script.js"></script>
</body>
</html>
```

FILE: styles.css
```css
/* Global Styles */
* {
  box-sizing: border-box;
}

body {
  margin: 0;
  height: 100vh;
  display: flex;
  flex-direction: column;
  overflow: hidden;
  background-color: #f0f0f0;
  color: #333;
  font-family: "Noto Sans", "Noto Sans CJK SC", sans-serif;
  font-size: 13px;
  line-height: 16px;
}

.sprite {
  display: none;
}

.en {
  font-size: 11px;
}

a {
  color: inherit;
  text-decoration: none;
}

button {
  font: inherit;
  color: inherit;
  background: none;
  border: none;
  padding: 0;
  display: flex;
  align-items: center;
  justify-content: center;
}

input, select {
  font: inherit;
  color: inherit;
  border-radius: 0;
  min-width: 0;
}

input::placeholder {
  color: #999;
}

h1, h2, ul {
  margin: 0;
  padding: 0;
  font-weight: normal;
}

svg {
  flex: none;
}

/* Title Bar */
.titlebar {
  background-color: #0072c8;
  color: #fff;
  flex: none;
}

.title-row {
  height: 32px;
  display: grid;
  grid-template-columns: 1fr auto 1fr;
  align-items: center;
}

.quick {
  display: flex;
  justify-content: space-between;
  width: 298px;
  padding-left: 6px;
}

.quick svg {
  width: 16px;
  height: 16px;
  fill: none;
  stroke: #fff;
}

.quick button:nth-child(-n+2) svg {
  stroke: none;
}

.title-row h1 {
  font-size: 11px;
}

.window-buttons {
  display: flex;
  justify-content: flex-end;
}

.window-buttons button {
  width: 47px;
}

.window-buttons svg {
  width: 14px;
  height: 14px;
  fill: none;
  stroke: #fff;
}

.tab-row {
  height: 20px;
  display: flex;
  justify-content: space-between;
}

.tab-row nav {
  display: flex;
}

.tab-row nav a {
  padding: 0 13px 0 12px;
  line-height: 20px;
}

.tab-row nav .file-tab {
  padding: 0 22px 0 18px;
}

.tab-row nav .active {
  padding-left: 14px;
  background-color: #f0f0f0;
  color: #333;
}

.feature-search {
  display: flex;
  align-items: center;
  gap: 7px;
  padding-right: 7px;
}

.feature-search input {
  width: 163px;
  height: 19px;
  padding: 0 5px;
  border: 1px solid #ddd;
  background-color: #fff;
  font-size: 12px;
}

.feature-search svg:last-child {
  margin-left: 6px;
}

/* Ribbon */
.ribbon {
  flex: none;
  height: 92px;
  display: flex;
  border-bottom: 1px solid #d5d5d5;
}

.group {
  margin: 6px 0 4px;
  padding: 0 4px;
  border-right: 1px solid #d5d5d5;
  display: flex;
  flex-direction: column;
  justify-content: space-between;
}

.tools {
  display: flex;
  height: 64px;
  margin-top: -3px;
}

.group-name {
  text-align: center;
  line-height: 14px;
}

.big {
  position: relative;
  flex-direction: column;
  justify-content: flex-start;
  gap: 4px;
  min-width: 45px;
  height: 67px;
  padding: 5px 6px 0;
  white-space: nowrap;
}

.big > svg {
  width: 28px;
  height: 28px;
  overflow: visible;
}

.big > .menu-caret {
  position: absolute;
  bottom: 5px;
  width: 6px;
  height: 6px;
}

.browse .big {
  min-width: 44px;
}

.pressed {
  background-color: #ababab;
}

button:disabled {
  color: #aaa;
}

.small-tools {
  display: flex;
  flex-direction: column;
  gap: 14px;
  padding: 11px 5px 0;
}

.browse .small-tools {
  padding: 11px 6px 0;
}

.small-tools button {
  justify-content: flex-start;
  gap: 5px;
  white-space: nowrap;
}

.small-tools svg {
  width: 14px;
  height: 16px;
}

.small-tools.geometry {
  padding-right: 9px;
}

.divider {
  width: 1px;
  height: 58px;
  margin: 5px 4px 0 0;
  background-color: #d5d5d5;
}

.collapse {
  margin: auto 10px 5px auto;
}

.svg-stat {
  font: 30px "Liberation Serif", serif;
  fill: #5d6c7b;
}

.svg-stat.tall {
  font-size: 36px;
}

.svg-stat.middle {
  text-anchor: middle;
}

.svg-sub {
  font: 14px "Liberation Serif", serif;
  fill: #5d6c7b;
  stroke: #f0f0f0;
  stroke-width: 2px;
  paint-order: stroke;
}

.svg-16 {
  font: 11px "Noto Sans", sans-serif;
  fill: #fff;
  text-anchor: middle;
}

.svg-udx {
  font: bold 6px "Noto Sans", sans-serif;
  fill: #fff;
  text-anchor: middle;
}

/* Workspace */
main {
  flex: 1;
  min-height: 0;
  display: grid;
  grid-template-columns: 309px minmax(0, 1fr) 289px;
  gap: 3px;
  padding: 2px 2px 0;
}

.left {
  min-height: 0;
  display: grid;
  grid-template-rows: minmax(0, 428fr) minmax(0, 426fr);
  gap: 4px;
}

.panel {
  border: 1px solid #adadad;
  display: flex;
  flex-direction: column;
  min-width: 0;
  min-height: 0;
}

.panel-head {
  display: flex;
  align-items: center;
  gap: 9px;
  height: 36px;
  padding: 0 12px;
  flex: none;
}

.panel-head h2 {
  flex: 1;
  font-size: 14px;
}

.panel-head svg {
  width: 10px;
  height: 10px;
}

.source-tabs {
  display: flex;
  gap: 18px;
  height: 38px;
  padding: 8px 11px 0;
  border-bottom: 1px solid #bbb;
  margin: 0 1px;
}

.source-tabs button {
  position: relative;
  height: 20px;
}

.source-tabs svg {
  width: 20px;
  height: 18px;
}

/* notch in the line under the selected source */
.source-tabs .active::after {
  content: "";
  position: absolute;
  left: 5px;
  top: 25px;
  width: 9px;
  height: 9px;
  border: solid #bbb;
  border-width: 1px 0 0 1px;
  background: linear-gradient(135deg, #f0f0f0 50%, transparent 50%);
  transform: rotate(45deg);
}

.find-bar {
  display: flex;
  align-items: center;
  height: 24px;
  margin: 7px 10px 0;
  padding-left: 2px;
  background-color: #fff;
  flex: none;
}

.find-bar svg {
  width: 16px;
  height: 16px;
}

.find-bar .tiny {
  width: 6px;
  height: 6px;
  margin-left: 2px;
}

.find-bar i {
  width: 1px;
  height: 14px;
  margin: 0 5px 0 6px;
  background-color: #bbb;
}

.find-bar input {
  width: 94px;
  margin-left: 10px;
  padding: 0;
  border: none;
  background: none;
}

.step {
  width: 14px;
  height: 14px;
  margin-right: 8px;
  border: 1px solid #999;
}

.step svg {
  width: 12px;
  height: 12px;
}

.find-bar.layers {
  height: 26px;
  margin: 0 2px;
  padding-left: 7px;
}

.find-bar.layers input {
  width: 78px;
}

.layer-box {
  flex: 1;
  margin: 1px 1px 2px;
  border: 1px solid #666;
  background-color: #fff;
}

.tree-box {
  flex: 1;
  min-height: 0;
  margin: 1px 10px 10px;
  border: 1px solid #666;
  background-color: #fff;
  display: grid;
  grid-template-columns: minmax(0, 1fr) 16px;
  grid-template-rows: minmax(0, 1fr) 16px;
}

.tree-clip {
  overflow: hidden;
}

.tree-box .hscroll {
  grid-column: 1 / 3;
  padding-right: 16px;
}

.ws-tree {
  list-style: none;
  height: 300px;
  display: grid;
  grid-template-rows: repeat(19, 1fr);
}

.ws-tree li {
  position: relative;
  display: flex;
  align-items: center;
  min-height: 0;
  white-space: nowrap;
}

.ws-tree svg {
  width: 16px;
  height: 14px;
  margin: 0 4px 0 6px;
  position: relative;
}

.ws-tree .lv0 { padding-left: 7px; }
.ws-tree .lv1 { padding-left: 26px; }
.ws-tree .lv2 { padding-left: 45px; }
.ws-tree .lv3 { padding-left: 64px; }

.ws-tree b {
  position: relative;
  width: 9px;
  height: 9px;
  border: 1px solid #888;
  background-color: #fff;
  font-size: 9px;
  font-weight: normal;
  line-height: 7px;
  text-align: center;
  z-index: 1;
}

.ws-tree s {
  align-self: stretch;
  width: 9px;
}

.ws-tree b::after,
.ws-tree s::after {
  content: "";
  position: absolute;
  width: 6px;
  left: 8px;
  top: 3px;
  border-top: 1px dotted #999;
}

.ws-tree s::after {
  width: 12px;
  left: auto;
  margin-left: 4px;
  top: 7px;
}

.ws-tree .lv3 s {
  border-left: 1px dotted #999;
  margin-left: 4px;
  width: 5px;
}

.ws-tree .lv3 s::after {
  margin-left: 0;
}

.ws-tree li:not(.lv0)::before {
  content: "";
  position: absolute;
  left: 30px;
  top: 0;
  bottom: 0;
  border-left: 1px dotted #999;
}

.ws-tree .selected {
  background-color: #6fc1ff;
  padding: 0 2px;
  margin-left: -2px;
  line-height: 15px;
}

/* Scrollbars */
.hscroll {
  display: flex;
  align-items: center;
  height: 16px;
  background-color: #f0f0f0;
  flex: none;
}

.hscroll > svg {
  width: 18px;
  height: 10px;
}

.htrack {
  flex: 1;
  height: 15px;
}

.hthumb {
  width: 59%;
  height: 15px;
  background-color: #cdcdcd;
}

.tree-thumb {
  width: 97%;
}

.vscroll {
  display: flex;
  flex-direction: column;
  align-items: center;
  background-color: #f0f0f0;
}

.vscroll svg {
  width: 9px;
  height: 16px;
}

.vtrack {
  flex: 1;
  align-self: stretch;
}

.vthumb {
  height: 89%;
  background-color: #cdcdcd;
}

/* Attribute tables */
.center {
  min-width: 0;
  min-height: 0;
  padding-top: 2px;
  display: grid;
  grid-template-columns: minmax(0, 1fr);
  grid-template-rows: minmax(0, 544fr) minmax(0, 298fr);
  gap: 14px;
}

.doc {
  position: relative;
  display: flex;
  flex-direction: column;
  border: solid #b0b0b0;
  border-width: 0 1px 1px;
  min-width: 0;
  min-height: 0;
}

.doc-tabs {
  display: flex;
  height: 23px;
  border-bottom: 2px solid #666;
  color: #707070;
  flex: none;
}

.doc-tabs a {
  padding: 0 27px 0 10px;
  line-height: 21px;
  white-space: nowrap;
}

.doc-tabs .active {
  display: flex;
  align-items: center;
  gap: 12px;
  padding: 0 9px 0 11px;
  background-color: #666;
  color: #fff;
}

.doc-tabs a svg {
  width: 9px;
  height: 9px;
}

.doc-tabs button {
  margin: 0 5px 4px auto;
}

.doc-tabs button svg {
  width: 8px;
  height: 8px;
}

.inactive .doc-tabs {
  border-color: #a0a0a0;
}

.inactive .doc-tabs .active {
  background-color: #a0a0a0;
}

.grid-area {
  flex: 1;
  min-height: 0;
  overflow: hidden;
}

.attr {
  table-layout: fixed;
  width: 1356px;
  border-collapse: separate;
  border-spacing: 0;
  color: #111;
}

.attr th,
.attr td {
  width: 99px;
  height: 23px;
  padding: 0;
  border: solid #d0d0d0;
  border-width: 0 1px 1px 0;
  background-color: #fff;
  font-weight: normal;
  line-height: 16px;
  text-align: center;
  white-space: nowrap;
}

.attr tr:nth-child(3n) th,
.attr tr:nth-child(3n) td {
  height: 22px;
}

.attr thead th,
.attr tbody th {
  position: relative;
  background-color: #e0e0e0;
}

.attr thead th {
  height: 22px;
  border-color: #bbb;
}

.attr th:first-child {
  width: 69px;
}

.attr thead th:first-child {
  padding-right: 4px;
}

/* frozen column edges */
.attr thead th:nth-child(-n+2)::after {
  content: "";
  position: absolute;
  right: 2px;
  top: 3px;
  width: 4px;
  height: 16px;
  background-color: #0000f0;
}

.current tbody tr:first-child th::before {
  content: "";
  position: absolute;
  left: 1px;
  top: 0;
  bottom: 0;
  width: 15px;
  background-color: #fff;
}

.current tbody tr:first-child th::after {
  content: "";
  position: absolute;
  left: 5px;
  top: 7px;
  border: solid transparent;
  border-width: 4px 0 4px 4px;
  border-left-color: #000;
}

.current tbody tr:first-child td:nth-child(2) {
  position: relative;
  outline: 2px solid #000;
  outline-offset: -2px;
}

.current tbody tr:first-child td:nth-child(2)::after {
  content: "";
  position: absolute;
  right: 0;
  bottom: 0;
  width: 5px;
  height: 5px;
  background-color: #000;
}

.tooltip {
  position: absolute;
  left: 763px;
  top: 205px;
  padding: 1px 12px 1px 5px;
  border: 1px solid #777;
  background-color: #fff;
  box-shadow: 3px 3px 2px #999;
  color: #666;
  font-size: 12px;
  line-height: 18px;
}

/* Status row under each table */
.status {
  display: flex;
  align-items: center;
  height: 24px;
  padding-left: 10px;
  border-top: 1px solid #b5b5b5;
  flex: none;
  white-space: nowrap;
}

.check {
  display: flex;
  align-items: center;
  gap: 1px;
  font-size: 12px;
}

.check input {
  appearance: none;
  flex: none;
  width: 12px;
  height: 12px;
  margin: 0;
  border: 1px solid #999;
  background-color: #fff;
  display: grid;
  place-items: center;
}

.check input:checked::before {
  content: "";
  width: 4px;
  height: 7px;
  margin-bottom: 2px;
  border: solid #666;
  border-width: 0 1px 1px 0;
  transform: rotate(40deg);
}

.count {
  width: 92px;
  padding-left: 12px;
}

.cell {
  width: 76px;
  padding-left: 7px;
  border: solid #ccc;
  border-width: 0 1px;
  line-height: 22px;
}

.status input[type="text"] {
  height: 20px;
  border: 1px solid #aaa;
  background-color: #f0f0f0;
  padding: 0 5px;
  font-size: 12px;
}

.status .type {
  width: 99px;
  margin: 0 8px 0 4px;
}

.status .blank {
  width: 79px;
}

/* the drop-down triangle is two gradient halves beside a divider line */
.status select {
  appearance: none;
  width: 148px;
  height: 20px;
  margin: 0 8px;
  padding: 0 4px;
  border: 1px solid #aaa;
  background-color: #fff;
  background-image: linear-gradient(to bottom right, #555 50%, transparent 50%), linear-gradient(to bottom left, #555 50%, transparent 50%), linear-gradient(#aaa, #aaa), linear-gradient(#f0f0f0, #f0f0f0);
  background-size: 3px 5px, 3px 5px, 1px 100%, 16px 100%;
  background-position: right 4px center, right 7px center, right 15px top, right top;
  background-repeat: no-repeat;
  font-size: 11px;
}

.status .result {
  flex: 1;
  margin-right: 9px;
}

.status > button {
  margin-right: 9px;
}

.status > button + button {
  margin-right: 4px;
}

.status > button svg {
  width: 16px;
  height: 16px;
}

.pager {
  display: flex;
}

.pager button {
  width: 22px;
}

.pager svg {
  width: 10px;
  height: 12px;
}

.max {
  width: 102px;
  padding-left: 9px;
  border-right: 1px solid #ccc;
  line-height: 22px;
}

.status input.limit {
  width: 99px;
  margin-left: 4px;
  font-size: 11px;
}

.status input.limit:enabled {
  background-color: #fff;
}

.status input.limit:disabled {
  color: #999;
}

.pages {
  width: 91px;
  padding-left: 11px;
}

/* Catalog */
.catalog-bar {
  display: flex;
  align-items: center;
  height: 33px;
  margin: 0 1px;
  padding: 0 1px 0 4px;
  background-color: #fff;
  flex: none;
}

.catalog-bar > button {
  width: 20px;
  margin-right: 7px;
}

.catalog-bar > button svg {
  width: 18px;
  height: 20px;
}

.catalog-bar i {
  width: 1px;
  height: 22px;
  margin-right: 3px;
  background-color: #aaa;
}

.catalog-search {
  flex: 1;
  min-width: 0;
  display: flex;
  align-items: center;
  height: 22px;
  padding: 0 2px 0 4px;
  border: 1px solid #666;
}

.catalog-search input {
  flex: 1;
  width: 100%;
  border: none;
  padding: 0;
  background: none;
}

.catalog-box {
  flex: 1;
  min-height: 0;
  margin: 3px 4px 0 7px;
  border: 1px solid #aaa;
  background-color: #fff;
}

.catalog-tree {
  list-style: none;
  height: 569px;
  display: grid;
  grid-template-rows: repeat(23, 1fr);
}

.catalog-tree li {
  position: relative;
  display: flex;
  align-items: center;
  min-height: 0;
  white-space: nowrap;
}

.catalog-tree .lv0 { padding-left: 19px; }
.catalog-tree .lv1 { padding-left: 37px; }
.catalog-tree .lv2 { padding-left: 55px; }
.catalog-tree .lv3 { padding-left: 73px; }

.catalog-tree svg {
  width: 16px;
  height: 16px;
}

.catalog-tree li > span {
  padding-left: 4px;
}

.catalog-tree .path {
  font-size: 12px;
}

.catalog-tree .selected {
  flex: 1;
  line-height: 24px;
  background-color: #d9d9d9;
}

.catalog-tree .open::before,
.catalog-tree .shut::before {
  content: "";
  margin: 0 7px 0 -13px;
}

.catalog-tree .open::before {
  width: 6px;
  height: 6px;
  background: linear-gradient(to bottom right, transparent 50%, #555 50%);
}

.catalog-tree .shut::before {
  border: solid transparent;
  border-width: 4px 0 4px 5px;
  border-left-color: #555;
  margin-right: 8px;
}

.catalog-tabs {
  display: flex;
  height: 28px;
  margin: 18px 1px 0;
  padding-left: 1px;
  border-top: 1px solid #aaa;
  flex: none;
}

.catalog-tabs a {
  height: 25px;
  padding: 0 7px;
  line-height: 23px;
}

.catalog-tabs .active {
  padding: 0 6px;
  background-color: #d9d9d9;
}

/* Footer */
footer {
  flex: none;
  display: flex;
  gap: 20px;
  height: 24px;
  padding-left: 11px;
  line-height: 26px;
}
```

FILE: script.js
```js
// Field names and records of the attribute table
const fields = ['序号', 'SmUserID', 'ElementID', 'CategoryID', 'CategoryName', 'TypeID', 'TypeName',
  'ElementName', 'UniqueID', 'DocumentTitle', 'GroupId', '长度', '与邻近图元...', ''];
const ids = ['236,566', '236,593', '236,646', '236,720', '236,768', '236,831', '236,897'];
const lengths = ['9.500', '1.583', '1.250', '9.500', '1.250', '1.583', '9.500'];

// Latin runs are set smaller than the Chinese text
function mixed(text) {
  return text.replace(/[\x20-\x7e]+/g, run =>
    '<span class="en">' + run.replace(/</g, '&lt;').replace(/>/g, '&gt;') + '</span>');
}

function buildTable(table) {
  const head = fields.map(name => `<th>${mixed(name)}</th>`).join('');
  const rows = ids.map((id, i) => {
    const cells = ['0', id, '-2000066', '<房间分隔>', '-1', '模型线', '模型线',
      '14ff2a1c-c7f4-...', '萨伏伊别墅...', '-1', lengths[i], '否', '<房间分隔>'];
    return `<tr><th>${mixed(String(i + 1))}</th>` + cells.map(c => `<td>${mixed(c)}</td>`).join('') + '</tr>';
  }).join('');
  table.innerHTML = `<thead><tr>${head}</tr></thead><tbody>${rows}</tbody>`;
}

document.querySelectorAll('.attr').forEach(buildTable);
```
